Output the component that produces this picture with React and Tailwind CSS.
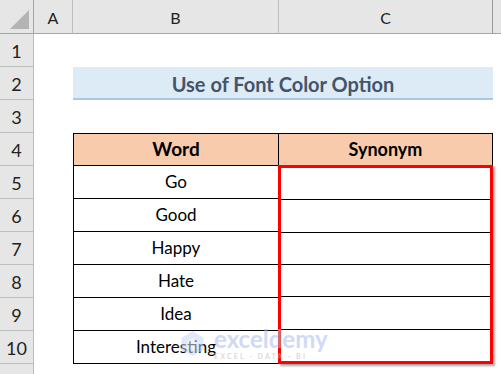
import React from 'react';

const font = { fontFamily: 'Lato, "Open Sans", sans-serif' };

const words = ['Go', 'Good', 'Happy', 'Hate', 'Idea', 'Interesting'];

const RowHead = ({ n }) => (
  <div className="flex items-center justify-center bg-[#e6e6e6] border-r border-b border-[#bdbdbd] text-[18px] text-[#222] pt-[2px]">
    {n}
  </div>
);

const ColHead = ({ label, last }) => (
  <div className={`flex items-center justify-center bg-[#e6e6e6] border-b border-[#a6a6a6] text-[16px] text-[#222] pt-[3px] ${last ? '' : 'border-r border-r-[#bdbdbd]'}`}>
    {label}
  </div>
);

const Watermark = () => (
  <div className="absolute left-[179px] top-[327px] z-20 flex items-center gap-[8px] opacity-55 pointer-events-none">
    <svg width="27" height="27" viewBox="0 0 26 27">
      <path d="M13 1 L24 8 L24 20 L13 26 L2 20 L2 8 Z" fill="#c9d6f2" />
      <path d="M8 11 L13 8 L18 11 L18 18 L13 21 L8 18 Z" fill="#e4ebf9" />
    </svg>
    <div className="flex flex-col leading-none">
      <span className="text-[24px] font-bold text-[#a9bdee]">exceldemy</span>
      <span className="text-[7px] font-bold text-[#bdbdbd] tracking-[2.2px] mt-[2px]">EXCEL · DATA · BI</span>
    </div>
  </div>
);

export default function App() {
  return (
    <div className="relative w-[501px] h-[374px] bg-white overflow-hidden" style={font}>
      <div className="grid grid-cols-[34px_39px_206px_214px_1fr] grid-rows-[34px_repeat(10,33px)_1fr] h-full">
        {/* column headers */}
        <div className="relative bg-[#e6e6e6] border-r border-b border-[#a6a6a6]">
          <div className="absolute right-[4px] bottom-[4px] w-0 h-0 border-l-[19px] border-l-transparent border-b-[19px] border-b-[#b4b4b4]" />
        </div>
        <ColHead label="A" />
        <ColHead label="B" />
        <ColHead label="C" />
        <div className="bg-[#e6e6e6] border-b border-[#a6a6a6] border-l border-l-[#9a9a9a] ml-[-1px]" />

        {/* row 1 */}
        <RowHead n={1} />
        <div className="col-span-4" />

        {/* row 2 - title */}
        <RowHead n={2} />
        <div />
        <div className="col-span-2 flex items-center justify-center bg-[#ddebf7] border-b-2 border-[#a9c8e6] text-[20px] font-bold text-[#44546a] pt-[2px]">
          Use of Font Color Option
        </div>
        <div />

        {/* row 3 */}
        <RowHead n={3} />
        <div className="col-span-4" />

        {/* row 4 - table header */}
        <RowHead n={4} />
        <div />
        <div className="flex items-center justify-center bg-[#f8cbad] border border-black text-[19px] font-bold text-black">
          Word
        </div>
        <div className="flex items-center justify-center bg-[#f8cbad] border-y border-r border-black text-[18px] font-bold text-black">
          Synonym
        </div>
        <div />

        {/* rows 5-10 */}
        {words.map((w, i) => (
          <React.Fragment key={w}>
            <div style={{ gridColumn: 1, gridRow: i + 6 }}>
              <div className="h-full flex items-center justify-center bg-[#e6e6e6] border-r border-b border-[#bdbdbd] text-[18px] text-[#222] pt-[2px]">
                {i + 5}
              </div>
            </div>
            <div
              className="flex items-center justify-center border-x border-b border-black text-[17px] text-black"
              style={{ gridColumn: 3, gridRow: i + 6 }}
            >
              {w}
            </div>
          </React.Fragment>
        ))}

        {/* synonym column with red selection */}
        <div className="col-start-4 row-start-6 row-span-6 flex flex-col mt-[-1px] ml-[-1px] border-[3px] border-[#ff0000] shadow-[2px_2px_2px_rgba(0,0,0,0.35)] z-10">
          {words.map((w, i) => (
            <div key={w} className={`flex-1 ${i < words.length - 1 ? 'border-b border-black' : ''}`} />
          ))}
        </div>

        {/* row 11 */}
        <div className="col-start-1 row-start-12 bg-[#e6e6e6] border-r border-[#bdbdbd]" />
      </div>
      <Watermark />
    </div>
  );
}
